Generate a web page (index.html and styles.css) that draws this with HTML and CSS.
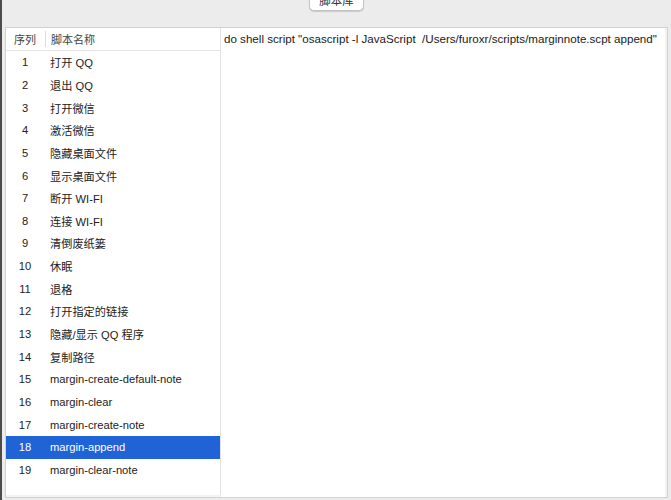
FILE: index.html
```html
<!DOCTYPE html>
<html>
<head>
<meta charset="utf-8">
<link rel="stylesheet" href="styles.css">
</head>
<body>
<div class="window">
  <div class="toolbar">
    <div class="tab-button">脚本库</div>
  </div>
  <div class="panel">
    <div class="table">
      <div class="thead">
        <div class="c-num">序列</div>
        <div class="c-sep"></div>
        <div class="c-name">脚本名称</div>
      </div>
      <div class="tbody">
        <div class="row"><div class="c-num">1</div><div class="c-name">打开 QQ</div></div>
        <div class="row"><div class="c-num">2</div><div class="c-name">退出 QQ</div></div>
        <div class="row"><div class="c-num">3</div><div class="c-name">打开微信</div></div>
        <div class="row"><div class="c-num">4</div><div class="c-name">激活微信</div></div>
        <div class="row"><div class="c-num">5</div><div class="c-name">隐藏桌面文件</div></div>
        <div class="row"><div class="c-num">6</div><div class="c-name">显示桌面文件</div></div>
        <div class="row"><div class="c-num">7</div><div class="c-name">断开 WI-FI</div></div>
        <div class="row"><div class="c-num">8</div><div class="c-name">连接 WI-FI</div></div>
        <div class="row"><div class="c-num">9</div><div class="c-name">清倒废纸篓</div></div>
        <div class="row"><div class="c-num">10</div><div class="c-name">休眠</div></div>
        <div class="row"><div class="c-num">11</div><div class="c-name">退格</div></div>
        <div class="row"><div class="c-num">12</div><div class="c-name">打开指定的链接</div></div>
        <div class="row"><div class="c-num">13</div><div class="c-name">隐藏/显示 QQ 程序</div></div>
        <div class="row"><div class="c-num">14</div><div class="c-name">复制路径</div></div>
        <div class="row"><div class="c-num">15</div><div class="c-name">margin-create-default-note</div></div>
        <div class="row"><div class="c-num">16</div><div class="c-name">margin-clear</div></div>
        <div class="row"><div class="c-num">17</div><div class="c-name">margin-create-note</div></div>
        <div class="row selected"><div class="c-num">18</div><div class="c-name">margin-append</div></div>
        <div class="row"><div class="c-num">19</div><div class="c-name">margin-clear-note</div></div>
      </div>
    </div>
    <div class="editor">do shell script "osascript -l JavaScript &nbsp;/Users/furoxr/scripts/marginnote.scpt append"</div>
  </div>
</div>
</body>
</html>
```

FILE: styles.css
```css
html, body {
  margin: 0;
  padding: 0;
  height: 100%;
}
body {
  background: #ececec;
  font-family: "Liberation Sans", "Noto Sans CJK SC", sans-serif;
  color: #222;
  overflow: hidden;
}
.window {
  height: 500px;
  border-left: 2px solid #4c4c4c;
  box-sizing: border-box;
  display: flex;
  flex-direction: column;
}
.toolbar {
  height: 27px;
  display: flex;
  justify-content: center;
  flex: none;
}
.tab-button {
  margin-top: -9px;
  margin-left: 0;
  height: 20px;
  width: 55px;
  box-sizing: border-box;
  border: 1px solid #c4c4c4;
  border-radius: 5px;
  background: #fff;
  box-shadow: 0 1px 1px rgba(0,0,0,0.15);
  font-size: 11.5px;
  line-height: 18px;
  text-align: center;
  color: #333;
}
.panel {
  flex: none;
  height: 469px;
  margin: 0 3px 0 3px;
  border: 1px solid #d2d2d2;
  background: #f3f3f3;
  display: flex;
}
.table {
  width: 214px;
  margin: 0 0 2px 0;
  background: #fff;
  border-right: 1px solid #e2e2e2;
  flex: none;
  font-size: 11.2px;
}
.thead {
  height: 22px;
  border-bottom: 1px solid #e4e4e4;
  display: flex;
  align-items: center;
  color: #444;
  font-size: 11px;
}
.thead .c-sep {
  width: 1px;
  height: 16px;
  background: #dcdcdc;
  margin-left: 1px;
}
.c-num {
  width: 38px;
  text-align: center;
  flex: none;
}
.thead .c-name {
  padding-left: 5px;
}
.row {
  height: 22.65px;
  display: flex;
  align-items: center;
}
.row .c-name {
  padding-left: 6px;
}
.row.selected {
  background: #1f63d7;
  color: #fff;
}
.editor {
  flex: 1;
  background: #fff;
  margin-right: 2px;
  padding: 3px 0 0 3px;
  font-size: 11.6px;
  line-height: 16px;
  color: #1a1a1a;
  white-space: nowrap;
}
```
